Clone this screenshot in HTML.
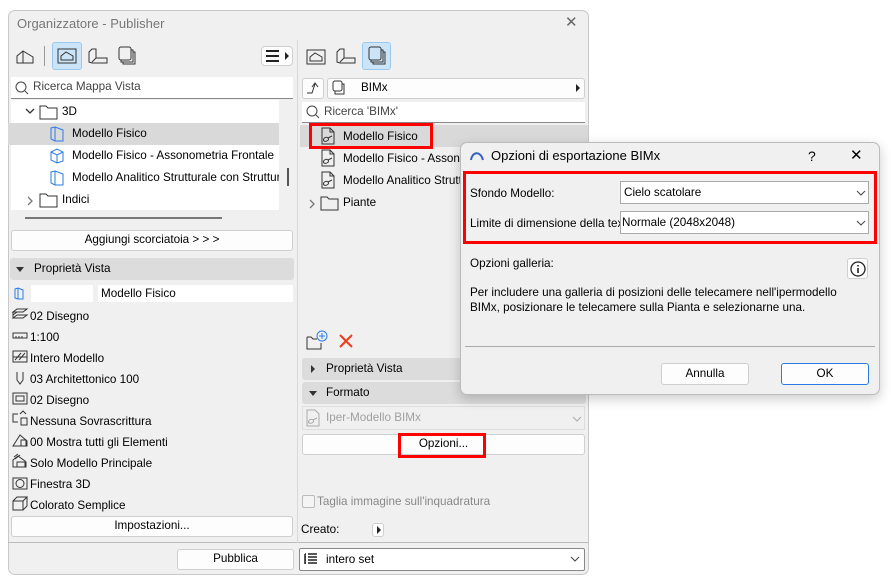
<!DOCTYPE html>
<html><head><meta charset="utf-8"><style>
body{margin:0;width:891px;height:583px;background:#fff;font-family:"Liberation Sans",sans-serif;font-size:11.7px;color:#000;position:relative;overflow:hidden}
.a{position:absolute}
.win{left:8px;top:10px;width:579px;height:563px;background:#f0f0f0;border:1px solid #c8c8c8;border-radius:7px}
.white{background:#fff}
.btn{background:#fdfdfd;border:1px solid #cfcfcf;border-radius:3px;text-align:center;box-sizing:border-box;line-height:18px}
.hdr{background:#dcdcdc;border-radius:3px;box-sizing:border-box;padding-left:24px;line-height:22px}
.t{white-space:nowrap}
.tr{font-size:11.7px}
.sel{background:#cce4f7;border:1px solid #99c9ef;border-radius:3px;box-sizing:border-box}
.red{border:3px solid #f00;box-sizing:border-box}
svg{position:absolute;overflow:visible}
</style></head><body>
<div class="a win"></div>
<div class="a t" style="left:17px;top:16px;color:#777;font-size:13px">Organizzatore - Publisher</div>
<div class="a t" style="left:565px;top:13px;font-size:15px;color:#666">✕</div>

<svg style="left:16px;top:49px" width="18" height="16"><path d="M1 14V7L7 2 12 5 17 8V14ZM7 2V14" fill="none" stroke="#333"/></svg>
<div class="a" style="left:44px;top:46px;width:1px;height:20px;background:#999"></div>
<div class="a sel" style="left:52px;top:42px;width:30px;height:28px"></div>
<svg style="left:57px;top:48px" width="20" height="16"><rect x="1" y="1" width="18" height="14" fill="none" stroke="#333"/><path d="M4 12V8L9 4 16 8V12Z" fill="none" stroke="#333"/></svg>
<svg style="left:88px;top:48px" width="20" height="16"><path d="M1 14V4L4 1H8V10H19V15H4Z M8 10L4 14" fill="none" stroke="#333"/></svg>
<svg style="left:118px;top:46px" width="18" height="20"><rect x="1" y="1" width="12" height="13" rx="2" fill="none" stroke="#333"/><path d="M3 14V16H15V4H13M5 16V18H17V6H15" fill="none" stroke="#333"/></svg>
<div class="a btn" style="left:261px;top:46px;width:32px;height:20px;border-radius:4px"></div>
<div class="a" style="left:266px;top:50px;width:13px;height:2px;background:#222;box-shadow:0 5px #222,0 10px #222"></div>
<div class="a" style="left:285px;top:52px;border-left:4px solid #222;border-top:4px solid transparent;border-bottom:4px solid transparent"></div>

<div class="a white" style="left:11px;top:77px;width:282px;height:21px;border-bottom:1px solid #888"></div>
<svg style="left:15px;top:81px" width="14" height="14"><circle cx="6" cy="6" r="5" fill="none" stroke="#444"/><path d="M10 10L13 13" stroke="#444"/></svg>
<div class="a t" style="left:33px;top:80px;color:#444">Ricerca Mappa Vista</div>

<div class="a white" style="left:11px;top:100px;width:268px;height:110px"></div>
<div class="a" style="left:8px;top:123px;width:271px;height:22px;background:#d9d9d9"></div>
<svg style="left:25px;top:108px" width="10" height="8"><path d="M1 1L5 5 9 1" fill="none" stroke="#333" stroke-width="1.3"/></svg>
<svg style="left:39px;top:104px" width="20" height="16"><path d="M1 2H7L9 4H18V15H1Z" fill="none" stroke="#333"/></svg>
<div class="a t" style="left:62px;top:105px">3D</div>
<svg style="left:50px;top:126px" width="14" height="16"><path d="M1 2L5 1 13 4V15L5 15 1 13Z M5 1V15" fill="none" stroke="#2a7be4"/></svg>
<div class="a t tr" style="left:72px;top:127px">Modello Fisico</div>
<svg style="left:50px;top:148px" width="14" height="16"><path d="M1 4L7 1 13 4V13L7 15 1 12Z M1 4L7 7 13 4M7 7V15" fill="none" stroke="#2a7be4"/></svg>
<div class="a t tr" style="left:72px;top:149px">Modello Fisico - Assonometria Frontale</div>
<svg style="left:50px;top:170px" width="14" height="16"><path d="M1 2L5 1 13 4V15L5 15 1 13Z M5 1V15" fill="none" stroke="#2a7be4"/></svg>
<div class="a t tr" style="left:72px;top:171px;width:207px;overflow:hidden">Modello Analitico Strutturale con Struttura</div>
<div class="a" style="left:287px;top:168px;width:2px;height:18px;background:#555"></div>
<svg style="left:27px;top:196px" width="8" height="10"><path d="M1 1L5 5 1 9" fill="none" stroke="#777" stroke-width="1.3"/></svg>
<svg style="left:39px;top:192px" width="20" height="16"><path d="M1 2H7L9 4H18V15H1Z" fill="none" stroke="#333"/></svg>
<div class="a t" style="left:62px;top:193px">Indici</div>
<div class="a" style="left:25px;top:217px;width:197px;height:2px;background:#777"></div>

<div class="a btn" style="left:11px;top:230px;width:282px;height:21px">Aggiungi scorciatoia &gt; &gt; &gt;</div>
<div class="a hdr" style="left:10px;top:258px;width:284px;height:22px">Proprietà Vista</div>
<div class="a" style="left:16px;top:267px;border-top:5px solid #333;border-left:4px solid transparent;border-right:4px solid transparent"></div>

<svg style="left:14px;top:287px" width="10" height="13"><path d="M1 2L4 1 9 3V12L4 12 1 11Z M4 1V12" fill="none" stroke="#2a7be4"/></svg>
<div class="a white" style="left:31px;top:285px;width:62px;height:17px"></div>
<div class="a white" style="left:98px;top:285px;width:195px;height:17px"></div>
<div class="a t" style="left:101px;top:287px">Modello Fisico</div>

<div class="a" style="left:12px;top:306px;line-height:21px;width:280px">
<div class="t" style="padding-left:18px">02 Disegno</div>
<div class="t" style="padding-left:18px">1:100</div>
<div class="t" style="padding-left:18px">Intero Modello</div>
<div class="t" style="padding-left:18px">03 Architettonico 100</div>
<div class="t" style="padding-left:18px">02 Disegno</div>
<div class="t" style="padding-left:18px">Nessuna Sovrascrittura</div>
<div class="t" style="padding-left:18px">00 Mostra tutti gli Elementi</div>
<div class="t" style="padding-left:18px">Solo Modello Principale</div>
<div class="t" style="padding-left:18px">Finestra 3D</div>
<div class="t" style="padding-left:18px">Colorato Semplice</div>
</div>
<svg style="left:12px;top:308px" width="16" height="210" fill="none" stroke="#333">
<path d="M1 4L5 1H15L11 4ZM1 7L5 4M1 10L5 7H15L11 10H1ZM1 4V10"/>
<rect x="1" y="25" width="14" height="5"/><path d="M4 28V30M7 28V30M10 28V30"/>
<rect x="1" y="43" width="14" height="11"/><path d="M3 52L9 45M7 52L13 45M1 49H15"/>
<path d="M5 64V72L8 76 11 72V64"/>
<rect x="1" y="85" width="14" height="11"/><rect x="4" y="88" width="8" height="5"/>
<path d="M6 106H1V114H6M9 110H15V117H9Z M8 106L11 103 14 106"/>
<path d="M1 138L8 127 15 133V138ZM9 132H14V138H9Z"/>
<path d="M1 159V152L6 148 13 153V159ZM5 154H14V159H5Z M2 149L6 146M3 151L8 147"/>
<rect x="1" y="170" width="14" height="11"/><circle cx="8" cy="175.5" r="4"/>
<path d="M1 193H11V202H1ZM1 193L5 189H15L11 193M15 189V198L11 202"/>
</svg>

<div class="a btn" style="left:11px;top:516px;width:282px;height:21px">Impostazioni...</div>
<div class="a" style="left:8px;top:542px;width:580px;height:1px;background:#bbb"></div>
<div class="a btn" style="left:177px;top:549px;width:117px;height:21px">Pubblica</div>
<div class="a" style="left:297px;top:40px;width:1px;height:503px;background:#d8d8d8"></div>

<svg style="left:306px;top:49px" width="20" height="16"><rect x="1" y="1" width="18" height="14" fill="none" stroke="#333"/><path d="M4 12V8L9 4 16 8V12Z" fill="none" stroke="#333"/></svg>
<svg style="left:336px;top:48px" width="20" height="16"><path d="M1 14V4L4 1H8V10H19V15H4Z M8 10L4 14" fill="none" stroke="#333"/></svg>
<div class="a sel" style="left:362px;top:42px;width:29px;height:28px"></div>
<svg style="left:368px;top:46px" width="18" height="20"><rect x="1" y="1" width="12" height="13" rx="2" fill="none" stroke="#333"/><path d="M3 14V16H15V4H13M5 16V18H17V6H15" fill="none" stroke="#333"/></svg>

<div class="a btn" style="left:302px;top:78px;width:22px;height:21px"></div>
<svg style="left:306px;top:81px" width="14" height="14"><path d="M1 12H6L9 3M6 6L9 2 12 6" fill="none" stroke="#333"/></svg>
<div class="a btn" style="left:327px;top:78px;width:258px;height:21px"></div>
<svg style="left:332px;top:80px" width="14" height="16"><rect x="1" y="1" width="9" height="10" rx="2" fill="none" stroke="#333"/><path d="M3 11V14H12V4H10" fill="none" stroke="#333"/></svg>
<div class="a t" style="left:361px;top:81px">BIMx</div>
<div class="a" style="left:576px;top:84px;border-left:4px solid #222;border-top:4px solid transparent;border-bottom:4px solid transparent"></div>

<div class="a white" style="left:302px;top:102px;width:283px;height:20px;border-bottom:1px solid #888"></div>
<svg style="left:306px;top:105px" width="14" height="14"><circle cx="6" cy="6" r="5" fill="none" stroke="#444"/><path d="M10 10L13 13" stroke="#444"/></svg>
<div class="a t" style="left:324px;top:105px;color:#444">Ricerca 'BIMx'</div>

<div class="a" style="left:300px;top:125px;width:288px;height:22px;background:#d9d9d9"></div>
<svg style="left:320px;top:127px;" width="16" height="80" fill="none" stroke="#333">
<path d="M2 1H10L14 5V17H2ZM10 1V5H14M4 14C2 12 6 9 8 11S6 15 4 14ZM8 11L12 9"/>
<path d="M2 23H10L14 27V39H2ZM10 23V27H14M4 36C2 34 6 31 8 33S6 37 4 36ZM8 33L12 31"/>
<path d="M2 45H10L14 49V61H2ZM10 45V49H14M4 58C2 56 6 53 8 55S6 59 4 58ZM8 55L12 53"/>
</svg>
<div class="a red" style="left:309px;top:123px;width:124px;height:26px"></div>
<div class="a t tr" style="left:343px;top:130px">Modello Fisico</div>
<div class="a t tr" style="left:343px;top:152px">Modello Fisico - Assonometria</div>
<div class="a t tr" style="left:343px;top:174px">Modello Analitico Strutturale</div>
<svg style="left:309px;top:199px" width="8" height="10"><path d="M1 1L5 5 1 9" fill="none" stroke="#777" stroke-width="1.3"/></svg>
<svg style="left:320px;top:195px" width="20" height="16"><path d="M1 2H7L9 4H18V15H1Z" fill="none" stroke="#333"/></svg>
<div class="a t tr" style="left:343px;top:196px">Piante</div>

<svg style="left:306px;top:330px" width="22" height="20"><path d="M1 7H5L7 9H11M1 7V19H15V13" fill="none" stroke="#333"/><circle cx="16" cy="6" r="5" fill="none" stroke="#2a7be4"/><path d="M16 3V9M13 6H19" stroke="#2a7be4"/></svg>
<svg style="left:339px;top:334px" width="14" height="14"><path d="M1 1L13 13M13 1L1 13" stroke="#f03a17" stroke-width="2"/></svg>

<div class="a hdr" style="left:302px;top:358px;width:284px;height:22px">Proprietà Vista</div>
<div class="a" style="left:311px;top:365px;border-left:4px solid #333;border-top:4px solid transparent;border-bottom:4px solid transparent"></div>
<div class="a hdr" style="left:302px;top:382px;width:284px;height:22px">Formato</div>
<div class="a" style="left:309px;top:391px;border-top:5px solid #333;border-left:4px solid transparent;border-right:4px solid transparent"></div>
<div class="a" style="left:302px;top:406px;width:283px;height:24px;border:1px solid #ddd;box-sizing:border-box;background:#f0f0f0"></div>
<svg style="left:305px;top:409px" width="16" height="18" fill="none" stroke="#aaa"><path d="M2 1H10L14 5V17H2ZM4 14C2 12 6 9 8 11S6 15 4 14ZM8 11L12 9"/></svg>
<div class="a t" style="left:326px;top:411px;color:#a0a0a0">Iper-Modello BIMx</div>
<svg style="left:572px;top:416px" width="10" height="6"><path d="M1 1L5 5 9 1" fill="none" stroke="#aaa"/></svg>
<div class="a btn" style="left:302px;top:434px;width:283px;height:21px">Opzioni...</div>
<div class="a red" style="left:398px;top:433px;width:88px;height:25px"></div>

<div class="a" style="left:302px;top:495px;width:11px;height:11px;border:1px solid #bbb;border-radius:2px;background:#f4f4f4"></div>
<div class="a t" style="left:317px;top:495px;color:#888">Taglia immagine sull'inquadratura</div>
<div class="a t" style="left:301px;top:523px">Creato:</div>
<div class="a btn" style="left:372px;top:523px;width:12px;height:14px"></div>
<div class="a" style="left:377px;top:526px;border-left:4px solid #222;border-top:4px solid transparent;border-bottom:4px solid transparent"></div>

<div class="a white" style="left:299px;top:548px;width:286px;height:23px;border:1px solid #888;box-sizing:border-box;border-radius:2px"></div>
<svg style="left:304px;top:553px" width="14" height="12"><path d="M1 1V11M4 1H13M4 4H13M4 7H13M4 10H13M1 1H2M1 4H2M1 7H2M1 10H2" stroke="#222" stroke-width="1.5"/></svg>
<div class="a t" style="left:326px;top:553px">intero set</div>
<svg style="left:570px;top:556px" width="10" height="6"><path d="M1 1L5 5 9 1" fill="none" stroke="#444"/></svg>

<div class="a" style="left:460px;top:142px;width:420px;height:253px;background:#f0f0f0;border:1px solid #bbb;border-radius:7px;box-shadow:0 4px 12px rgba(0,0,0,.2);box-sizing:border-box"></div>
<svg style="left:470px;top:149px" width="14" height="12"><path d="M1 11C2 3 10 1 13 11" fill="none" stroke="#3660c0" stroke-width="2"/></svg>
<div class="a t" style="left:491px;top:148px;font-size:13px">Opzioni di esportazione BIMx</div>
<div class="a t" style="left:808px;top:148px;font-size:14px">?</div>
<div class="a t" style="left:850px;top:146px;font-size:15px">✕</div>
<div class="a red" style="left:463px;top:171px;width:414px;height:73px"></div>
<div class="a t" style="left:470px;top:187px">Sfondo Modello:</div>
<div class="a white" style="left:620px;top:181px;width:249px;height:23px;border:1px solid #aaa;box-sizing:border-box"></div>
<div class="a t" style="left:624px;top:186px">Cielo scatolare</div>
<svg style="left:856px;top:190px" width="10" height="6"><path d="M1 1L5 5 9 1" fill="none" stroke="#444"/></svg>
<div class="a t" style="left:470px;top:217px;width:150px;overflow:hidden">Limite di dimensione della texture</div>
<div class="a white" style="left:620px;top:211px;width:249px;height:23px;border:1px solid #aaa;box-sizing:border-box"></div>
<div class="a t" style="left:622px;top:216px">Normale (2048x2048)</div>
<svg style="left:856px;top:220px" width="10" height="6"><path d="M1 1L5 5 9 1" fill="none" stroke="#444"/></svg>
<div class="a t" style="left:470px;top:257px">Opzioni galleria:</div>
<div class="a btn" style="left:847px;top:258px;width:21px;height:21px"></div>
<svg style="left:850px;top:261px" width="16" height="16"><circle cx="8" cy="8" r="7" fill="none" stroke="#222" stroke-width="1.3"/><path d="M8 7V12M8 4V5.5" stroke="#222" stroke-width="1.6"/></svg>
<div class="a" style="left:470px;top:285px;line-height:15px;width:400px">Per includere una galleria di posizioni delle telecamere nell'ipermodello<br>BIMx, posizionare le telecamere sulla Pianta e selezionarne una.</div>
<div class="a" style="left:465px;top:346px;width:410px;height:1px;background:#aaa"></div>
<div class="a btn" style="left:661px;top:363px;width:88px;height:22px;line-height:20px">Annulla</div>
<div class="a btn" style="left:781px;top:363px;width:88px;height:22px;line-height:20px;border:1px solid #2a7be4">OK</div>
</body></html>
